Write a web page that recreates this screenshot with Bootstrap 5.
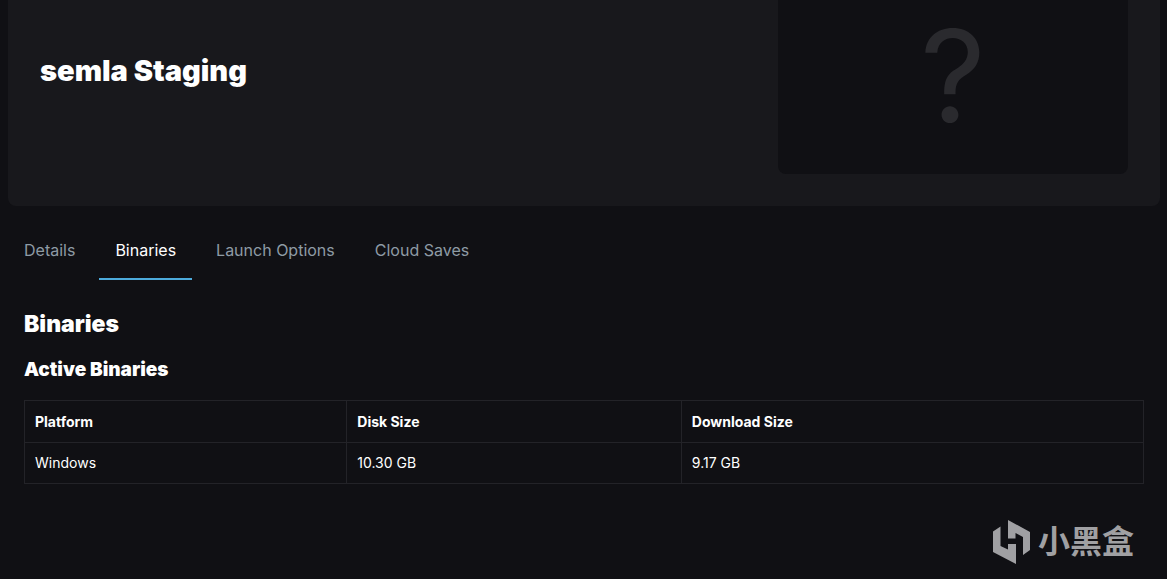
<!DOCTYPE html>
<html lang="en" data-bs-theme="dark">
<head>
<meta charset="utf-8">
<meta name="viewport" content="width=device-width, initial-scale=1">
<title>semla Staging</title>
<link href="https://cdn.jsdelivr.net/npm/bootstrap@5.3.0/dist/css/bootstrap.min.css" rel="stylesheet">
<style>
body{background:#101014;color:#fff;font-family:Inter,"Noto Sans CJK SC",sans-serif;font-size:14px;line-height:20px}
.app-page{padding:0 7px 0 8px}
.app-head{background:#18181c;border-radius:0 0 8px 8px;padding:0 32px 32px}
.app-title{font-size:29px;line-height:46px;font-weight:900}
.app-art{flex:0 0 350px;height:174px;background:#101014;border-radius:0 0 8px 8px;color:#2a2a2e;font-size:128px;line-height:152px}
.app-tabs{padding-top:20px}
.app-tabs .nav-link{color:#8e9ba5;font-size:16px;line-height:24px;padding:12px 16px 16px;border-bottom:2px solid transparent}
.app-tabs .nav-item{margin-right:8px}
.app-tabs .nav-link.active{color:#fff;border-color:#4dabdc}
.app-body{padding:24px 16px 32px}
.sec-title{font-size:23px;line-height:40px;font-weight:900;margin:0 0 10px}
.sub-title{font-size:19px;line-height:32px;font-weight:900;margin:0 0 14px}
.bin-table{--bs-table-bg:transparent;--bs-table-color:#fff;border-color:#232328}
.bin-table th,.bin-table td{padding:10px}
.bin-table th{line-height:21px}
.brand{color:#a0a0a3;padding-right:26px}
.brand-name{font-size:32px;line-height:52px;font-weight:700}
</style>
</head>
<body>
<main class="app-page">
<header class="app-head d-flex justify-content-between">
<h1 class="app-title mb-0 pt-5">semla Staging</h1>
<div class="app-art text-center">?</div>
</header>
<ul class="nav app-tabs">
<li class="nav-item"><a class="nav-link" href="#details">Details</a></li>
<li class="nav-item"><a class="nav-link active" aria-current="page" href="#binaries">Binaries</a></li>
<li class="nav-item"><a class="nav-link" href="#launch">Launch Options</a></li>
<li class="nav-item"><a class="nav-link" href="#cloud">Cloud Saves</a></li>
</ul>
<section class="app-body" id="binaries">
<h2 class="sec-title">Binaries</h2>
<h3 class="sub-title">Active Binaries</h3>
<table class="table table-bordered bin-table mb-0">
<colgroup><col style="width:28.8%"><col style="width:29.9%"><col></colgroup>
<thead><tr><th scope="col">Platform</th><th scope="col">Disk Size</th><th scope="col">Download Size</th></tr></thead>
<tbody><tr><td>Windows</td><td>10.30 GB</td><td>9.17 GB</td></tr></tbody>
</table>
</section>
<footer class="brand d-flex justify-content-end align-items-center gap-2">
<svg width="37" height="44" viewBox="0 0 37 44" fill="currentColor" aria-hidden="true"><path d="M0 11.5 7.5 6.5V26L15 29.5V24H23V44L0 32ZM15 0 37 12V30L30 35V17L22.5 13V18.5H15Z"/></svg>
<span class="brand-name">小黑盒</span>
</footer>
</main>
<script src="https://cdn.jsdelivr.net/npm/bootstrap@5.3.0/dist/js/bootstrap.bundle.min.js"></script>
</body>
</html>
